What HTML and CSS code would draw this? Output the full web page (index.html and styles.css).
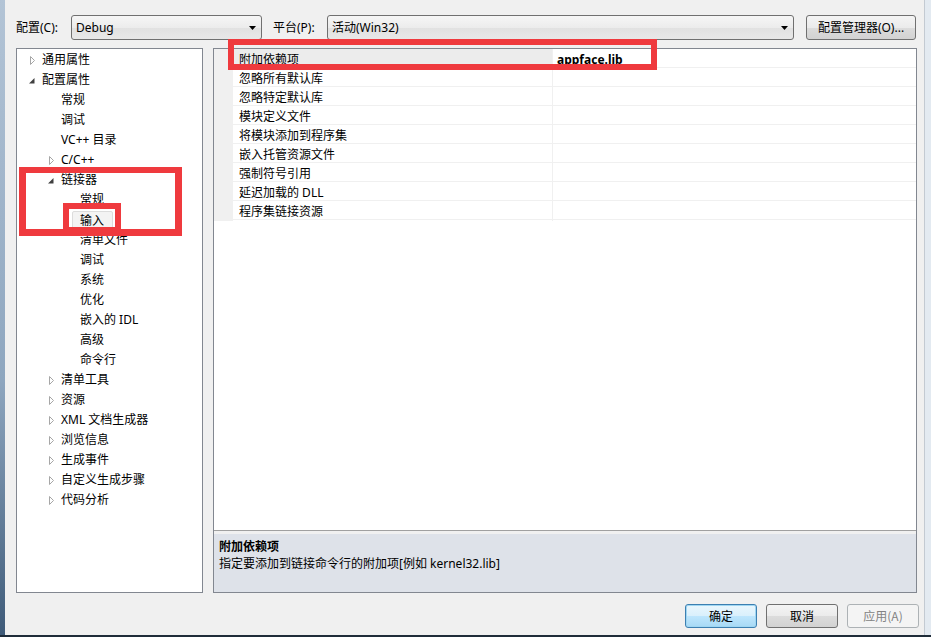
FILE: index.html
```html
<!DOCTYPE html>
<html>
<head>
<meta charset="utf-8">
<link rel="stylesheet" href="styles.css">
</head>
<body>
<div class="window">
  <div class="frame-row">
    <div class="frame-left"></div>
    <div class="content">
      <div class="topbar">
        <span class="lbl lbl1">配置(C):</span>
        <div class="combo combo1"><span>Debug</span><svg class="dd" width="7" height="4" viewBox="0 0 7 4"><polygon points="0,0 7,0 3.5,4" fill="#000"/></svg></div>
        <span class="lbl lbl2">平台(P):</span>
        <div class="combo combo2"><span>活动(Win32)</span><svg class="dd" width="7" height="4" viewBox="0 0 7 4"><polygon points="0,0 7,0 3.5,4" fill="#000"/></svg></div>
        <div class="btn btn-mgr">配置管理器(O)...</div>
      </div>
      <div class="mainrow">
        <div class="tree">
          <div class="ti l0"><span class="ar"><svg width="6" height="9" viewBox="0 0 6 9"><polygon points="0.5,0.5 4.5,4.5 0.5,8.5" fill="#fff" stroke="#a6a6a6"/></svg></span>通用属性</div>
          <div class="ti l0"><span class="ar"><svg class="ex" width="6" height="6" viewBox="0 0 6 6"><polygon points="5.5,0 5.5,5.5 0,5.5" fill="#404040"/></svg></span>配置属性</div>
          <div class="ti l1"><span class="ar"></span>常规</div>
          <div class="ti l1"><span class="ar"></span>调试</div>
          <div class="ti l1"><span class="ar"></span>VC++ 目录</div>
          <div class="ti l1"><span class="ar"><svg width="6" height="9" viewBox="0 0 6 9"><polygon points="0.5,0.5 4.5,4.5 0.5,8.5" fill="#fff" stroke="#a6a6a6"/></svg></span>C/C++</div>
          <div class="ti l1"><span class="ar"><svg class="ex" width="6" height="6" viewBox="0 0 6 6"><polygon points="5.5,0 5.5,5.5 0,5.5" fill="#404040"/></svg></span>链接器</div>
          <div class="ti l2"><span class="ar"></span>常规</div>
          <div class="ti l2"><span class="ar"></span><span class="sel">输入</span></div>
          <div class="ti l2"><span class="ar"></span>清单文件</div>
          <div class="ti l2"><span class="ar"></span>调试</div>
          <div class="ti l2"><span class="ar"></span>系统</div>
          <div class="ti l2"><span class="ar"></span>优化</div>
          <div class="ti l2"><span class="ar"></span>嵌入的 IDL</div>
          <div class="ti l2"><span class="ar"></span>高级</div>
          <div class="ti l2"><span class="ar"></span>命令行</div>
          <div class="ti l1"><span class="ar"><svg width="6" height="9" viewBox="0 0 6 9"><polygon points="0.5,0.5 4.5,4.5 0.5,8.5" fill="#fff" stroke="#a6a6a6"/></svg></span>清单工具</div>
          <div class="ti l1"><span class="ar"><svg width="6" height="9" viewBox="0 0 6 9"><polygon points="0.5,0.5 4.5,4.5 0.5,8.5" fill="#fff" stroke="#a6a6a6"/></svg></span>资源</div>
          <div class="ti l1"><span class="ar"><svg width="6" height="9" viewBox="0 0 6 9"><polygon points="0.5,0.5 4.5,4.5 0.5,8.5" fill="#fff" stroke="#a6a6a6"/></svg></span>XML 文档生成器</div>
          <div class="ti l1"><span class="ar"><svg width="6" height="9" viewBox="0 0 6 9"><polygon points="0.5,0.5 4.5,4.5 0.5,8.5" fill="#fff" stroke="#a6a6a6"/></svg></span>浏览信息</div>
          <div class="ti l1"><span class="ar"><svg width="6" height="9" viewBox="0 0 6 9"><polygon points="0.5,0.5 4.5,4.5 0.5,8.5" fill="#fff" stroke="#a6a6a6"/></svg></span>生成事件</div>
          <div class="ti l1"><span class="ar"><svg width="6" height="9" viewBox="0 0 6 9"><polygon points="0.5,0.5 4.5,4.5 0.5,8.5" fill="#fff" stroke="#a6a6a6"/></svg></span>自定义生成步骤</div>
          <div class="ti l1"><span class="ar"><svg width="6" height="9" viewBox="0 0 6 9"><polygon points="0.5,0.5 4.5,4.5 0.5,8.5" fill="#fff" stroke="#a6a6a6"/></svg></span>代码分析</div>
        </div>
        <div class="props">
          <div class="grid">
            <div class="row selrow"><div class="gut"></div><div class="name">附加依赖项</div><div class="val">appface.lib</div></div>
            <div class="row"><div class="gut"></div><div class="name">忽略所有默认库</div><div class="val"></div></div>
            <div class="row"><div class="gut"></div><div class="name">忽略特定默认库</div><div class="val"></div></div>
            <div class="row"><div class="gut"></div><div class="name">模块定义文件</div><div class="val"></div></div>
            <div class="row"><div class="gut"></div><div class="name">将模块添加到程序集</div><div class="val"></div></div>
            <div class="row"><div class="gut"></div><div class="name">嵌入托管资源文件</div><div class="val"></div></div>
            <div class="row"><div class="gut"></div><div class="name">强制符号引用</div><div class="val"></div></div>
            <div class="row"><div class="gut"></div><div class="name">延迟加载的 DLL</div><div class="val"></div></div>
            <div class="row"><div class="gut"></div><div class="name">程序集链接资源</div><div class="val"></div></div>
          </div>
          <div class="splitter"></div>
          <div class="desc">
            <div class="desc-title">附加依赖项</div>
            <div class="desc-text">指定要添加到链接命令行的附加项[例如 kernel32.lib]</div>
          </div>
        </div>
      </div>
      <div class="btnrow">
        <div class="btn btn-ok">确定</div>
        <div class="btn">取消</div>
        <div class="btn btn-dis">应用(A)</div>
      </div>
    </div>
    <div class="frame-right"></div>
  </div>
  <div class="frame-bottom"></div>
  <div class="mark mark1"></div>
  <div class="mark mark2"></div>
  <div class="mark mark3"></div>
</div>
</body>
</html>
```

FILE: styles.css
```css
* { box-sizing: border-box; }
html, body { margin: 0; padding: 0; }
body {
  font-family: "Noto Sans", "Noto Sans CJK SC", sans-serif;
  font-size: 12px;
  color: #000;
  background: #f0f0f0;
}
.window {
  position: relative;
  width: 931px;
  height: 637px;
  display: flex;
  flex-direction: column;
  background: #f0f0f0;
  overflow: hidden;
}
.frame-row { display: flex; height: 635px; }
.frame-left {
  width: 5px;
  background: linear-gradient(to bottom, #b3c4d6 0%, #8ea6bf 60%, #3f5b79 100%);
}
.frame-right {
  width: 8px;
  background: linear-gradient(to right, #f0f0f0 0 1px, #c3cad2 1px 2px, #e3eaf1 2px);
}
.frame-bottom { height: 2px; background: #1f2c39; }
.content {
  flex: 1;
  display: flex;
  flex-direction: column;
  padding: 15px 0 0 11px;
}
.topbar {
  display: flex;
  align-items: center;
  height: 25px;
}
.lbl { line-height: 25px; white-space: nowrap; }
.lbl1 { width: 55px; }
.lbl2 { width: 54px; margin-left: 11px; }
.combo {
  height: 25px;
  border: 1px solid #707070;
  border-radius: 3px;
  background: linear-gradient(to bottom, #f6f6f6 0%, #ececec 50%, #e1e1e1 51%, #e8e8e8 100%);
  display: flex;
  align-items: center;
  justify-content: space-between;
  padding: 0 5px 0 4px;
  line-height: 23px;
}
.combo1 { width: 191px; }
.combo2 { width: 467px; }
.dd { flex: none; margin-top: 1px; }
.btn {
  height: 24px;
  width: 72px;
  border: 1px solid #707070;
  border-radius: 3px;
  background: linear-gradient(to bottom, #f4f4f4 0%, #ebebeb 50%, #dcdcdc 51%, #d2d2d2 100%);
  display: flex;
  align-items: center;
  justify-content: center;
  line-height: 22px;
  white-space: nowrap;
  font-family: "Noto Sans CJK SC", "Noto Sans", sans-serif;
}
.btn-mgr { width: 110px; height: 25px; margin-left: 12px; font-family: "Noto Sans", "Noto Sans CJK SC", sans-serif; }
.btn-ok {
  border-color: #3c7fb1;
  background: linear-gradient(to bottom, #eaf6fd 0%, #d9f0fc 50%, #bee6fd 51%, #a7d9f5 100%);
  box-shadow: inset 0 0 0 1px #9fd6f2;
}
.btn-dis {
  border-color: #adb2b5;
  background: #f4f4f4;
  color: #838383;
  width: 72px;
}
.mainrow {
  display: flex;
  margin-top: 8px;
  height: 545px;
}
.tree {
  width: 187px;
  height: 545px;
  border: 1px solid #828790;
  background: #fff;
}
.ti {
  height: 20px;
  line-height: 20px;
  padding-top: 2px;
  display: flex;
  align-items: center;
  white-space: nowrap;
  font-family: "Noto Sans", "Noto Sans CJK SC", sans-serif;
}
.l0 { padding-left: 12px; }
.l1 { padding-left: 31px; }
.l2 { padding-left: 50px; }
.ar {
  width: 13px;
  height: 18px;
  flex: none;
  display: flex;
  align-items: center;
  padding-left: 1px;
  padding-top: 1px;
}
.ar .ex { margin-top: 1px; margin-left: -1px; }
.sel {
  display: inline-block;
  height: 19px;
  line-height: 17px;
  margin-left: -8px;
  padding: 0 8px 0 7px;
  background: #f3f3f3;
  border: 1px solid #dcdcdc;
  border-radius: 2px;
}
.props {
  width: 704px;
  height: 545px;
  margin-left: 10px;
  border: 1px solid #828790;
  display: flex;
  flex-direction: column;
}
.grid { flex: 1; background: #fff; }
.row {
  display: grid;
  grid-template-columns: 19px 320px 1fr;
  height: 19px;
  border-bottom: 1px solid #f0f0f0;
}
.gut { background: #f0f0f0; }
.name {
  padding-left: 6px;
  padding-top: 2px;
  line-height: 18px;
  border-right: 1px solid #f0f0f0;
  white-space: nowrap;
}
.selrow .name { background: #ececec; }
.val {
  padding-left: 4px;
  padding-top: 2px;
  line-height: 18px;
  font-weight: bold;
}
.splitter {
  height: 4px;
  border-top: 1px solid #a0a0a0;
  background: #f0f0f0;
}
.desc {
  height: 58px;
  background: #dee2e9;
  padding: 4px 0 0 5px;
  line-height: 17px;
}
.desc-title { font-weight: bold; }
.btnrow {
  display: flex;
  justify-content: flex-end;
  gap: 9px;
  margin-top: 11px;
  padding-right: 4px;
}
.mark {
  position: absolute;
  border-style: solid;
  border-color: #ef3a3e;
}
.mark1 { left: 228px; top: 39px; width: 429px; height: 31px; border-width: 6px; }
.mark2 { left: 19px; top: 167px; width: 163px; height: 69px; border-width: 6px 7px 7px 7px; }
.mark3 { left: 63px; top: 203px; width: 58px; height: 30px; border-width: 6px; }
```
